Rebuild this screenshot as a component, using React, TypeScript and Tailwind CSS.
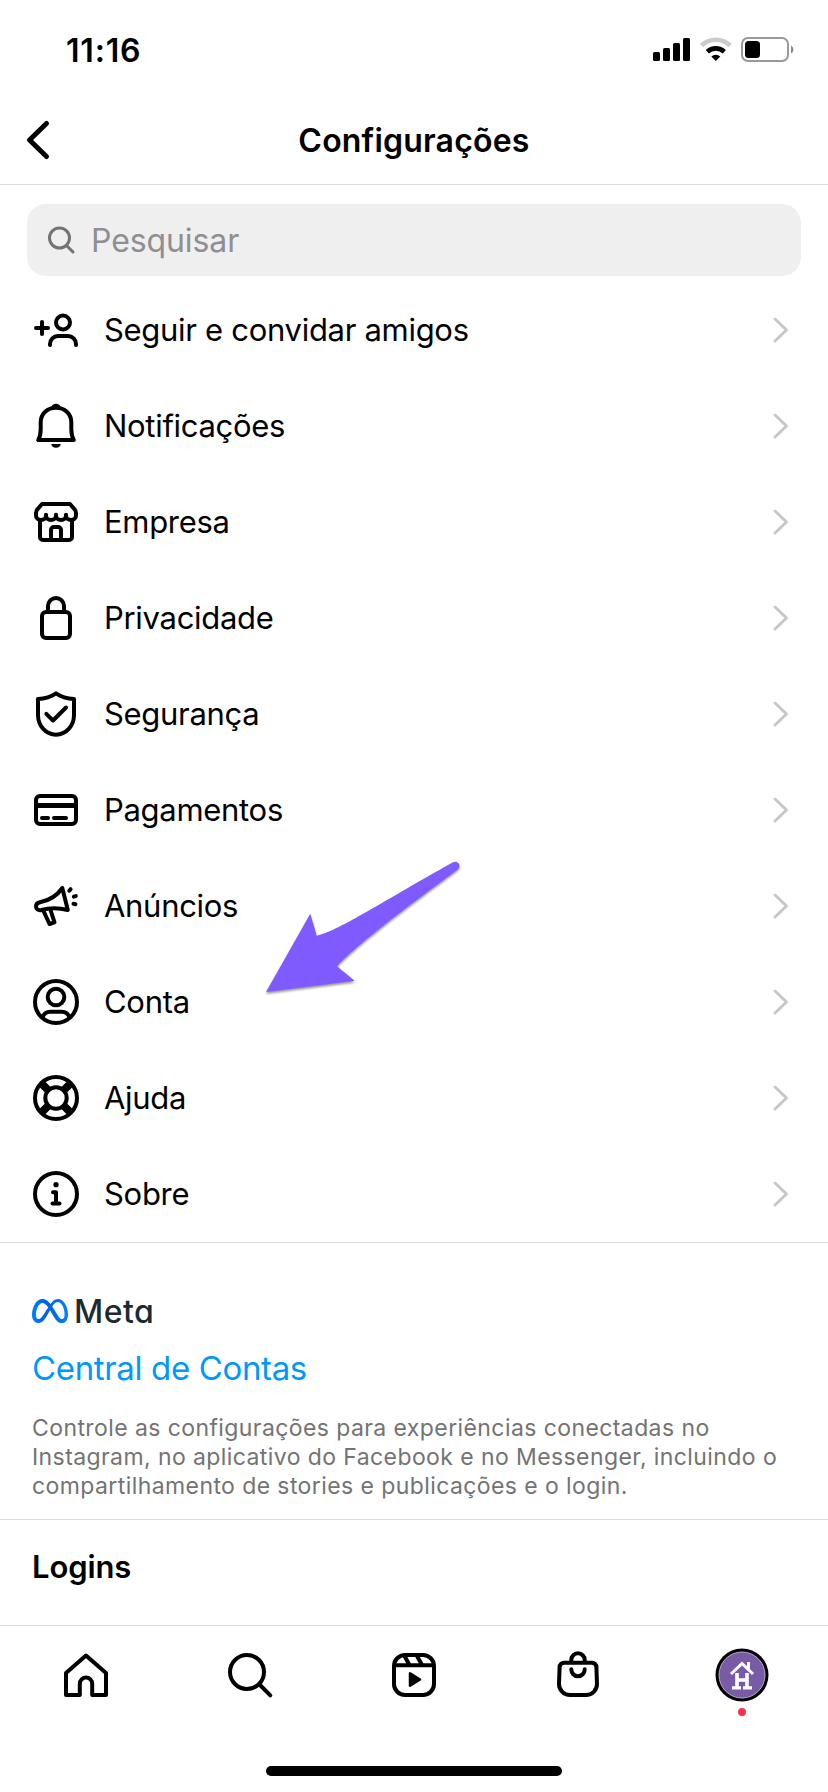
import type { ReactNode } from "react";
import { SiMeta } from "react-icons/si";

function Icon({ children }: { children: ReactNode }) {
  return (
    <svg
      viewBox="0 0 48 48"
      className="size-12 shrink-0 overflow-visible"
      fill="none"
      stroke="black"
      strokeWidth="4"
      strokeLinecap="round"
      strokeLinejoin="round"
    >
      {children}
    </svg>
  );
}

const items: { label: string; icon: ReactNode }[] = [
  {
    label: "Seguir e convidar amigos",
    icon: (
      <>
        <path d="M4 22h12M10 16v12" />
        <circle cx="31" cy="16.5" r="7" />
        <path d="M18 39v-1a8 8 0 0 1 8-8h10a8 8 0 0 1 8 8v1" />
      </>
    ),
  },
  {
    label: "Notificações",
    icon: (
      <>
        <path d="M6.2 38h35.6C40 35 39.3 31 39.3 27v-6.500C39.300 11.500 32.500 5.700 24 5.700S8.700 11.500 8.700 20.500V27c0 4-.7 8-2.500 11z" />
        <path d="M21.800 4.500a3.200 2.500 0 0 1 4.400 0" />
        <path d="M19.300 42h9.400a4.700 3.800 0 0 1-9.400 0z" fill="black" stroke="none" />
      </>
    ),
  },
  {
    label: "Empresa",
    icon: (
      <>
        <path d="M10 6h28l4.700 5.500a6 6 0 0 1 1.300 3.500v2.500a5 4.500 0 0 1-10 0a5 4.500 0 0 1-10 0a5 4.500 0 0 1-10 0a5 4.500 0 0 1-10 0V15a6 6 0 0 1 1.300-3.500z" />
        <path d="M14 16.700v2M24 16.700v2M34 16.700v2M8 23v16a3 3 0 0 0 3 3h26a3 3 0 0 0 3-3V23" />
        <path d="M19 42V32a3 3 0 0 1 3-3h4a3 3 0 0 1 3 3v10" />
      </>
    ),
  },
  {
    label: "Privacidade",
    icon: (
      <>
        <rect x="10" y="18" width="28" height="26" rx="4" />
        <path d="M16 18v-6a8 8 0 0 1 16 0v6" />
      </>
    ),
  },
  {
    label: "Segurança",
    icon: (
      <>
        <path d="M24 3.300C19 6.800 13 8.600 6 9v16c0 11 8 19.700 18 19.700S42 36 42 25V9c-7-.4-13-2.200-18-5.700z" />
        <path d="M14.300 23.800l6.700 6.700L34 17.500" />
      </>
    ),
  },
  {
    label: "Pagamentos",
    icon: (
      <>
        <rect x="4" y="10" width="40" height="28" rx="4" />
        <path d="M4 19.500h40" strokeWidth="5" strokeLinecap="butt" />
        <path d="M10 32h6M22 32h12" />
      </>
    ),
  },
  {
    label: "Anúncios",
    icon: (
      <>
        <path d="M8 20.300C17 18.500 25.500 13 30.300 6L35.800 28C27 25.800 17 25.800 9.500 28 6 28.800 4 27 4 24.500 4 22.500 5.500 20.800 8 20.300z" />
        <path d="M11.500 29l6 13 5-1.600-4-12.400" />
        <path d="M37.300 8.700l1.300-1.500M41.800 14.700l2-.6M41.500 21.800l2 .4" />
      </>
    ),
  },
  {
    label: "Conta",
    icon: (
      <>
        <circle cx="24" cy="24" r="21" />
        <circle cx="24" cy="19" r="8.300" />
        <path d="M10.500 39.500c1.300-3.700 3.800-5.700 7.800-5.700h11.400c4 0 6.500 2 7.800 5.700" />
      </>
    ),
  },
  {
    label: "Ajuda",
    icon: (
      <>
        <circle cx="24" cy="24" r="21" />
        <circle cx="24" cy="24" r="10.700" />
        <path
          d="M15.500 15.500l-6-6M32.500 15.500l6-6M15.500 32.500l-6 6M32.500 32.500l6 6"
          strokeWidth="8"
          strokeLinecap="butt"
        />
      </>
    ),
  },
  {
    label: "Sobre",
    icon: (
      <>
        <circle cx="24" cy="24" r="21" />
        <circle cx="24" cy="14.700" r="2.600" fill="black" stroke="none" />
        <path d="M21 22.300h3V33.500M20.500 33.500h7" />
      </>
    ),
  },
];

function StatusBar() {
  return (
    <div className="flex h-22 items-start justify-between pt-[34px] pr-[34px] pl-[66px]">
      <span className="pt-px text-[32px] leading-8 font-semibold tracking-[0.8px]">11:16</span>
      <svg width="142" height="32" viewBox="0 0 142 32" className="block">
        <rect x="1" y="18" width="7" height="9" rx="1.500" />
        <rect x="11" y="14" width="7" height="13" rx="1.500" />
        <rect x="21" y="9" width="7" height="18" rx="1.500" />
        <rect x="31" y="4" width="7" height="23" rx="1.500" />
        <g fill="none" strokeWidth="4.600">
          <path d="M49.500 11.500a20.500 20.500 0 0 1 28.500 0" stroke="#cbcbcb" />
          <path d="M55.300 17.700a12.500 12.500 0 0 1 17 0" stroke="black" />
        </g>
        <path d="M59.300 22.500a7 7 0 0 1 9 0L63.800 27z" />
        <rect x="90" y="4" width="46" height="23" rx="6" fill="none" stroke="#999" strokeWidth="2" />
        <rect x="93" y="7" width="15" height="17" rx="3.500" />
        <path d="M139 11.500a4.500 4.500 0 0 1 0 8z" fill="#888" />
      </svg>
    </div>
  );
}

function Header() {
  return (
    <header className="flex h-[97px] items-start border-b border-[#dbdbdb] px-6 pt-[30px]">
      <svg width="30" height="44" viewBox="0 0 30 44" className="w-[100px]" preserveAspectRatio="xMinYMid">
        <path
          d="M22.500 5.500L5.500 22l17 16.500"
          fill="none"
          stroke="black"
          strokeWidth="5"
          strokeLinecap="round"
          strokeLinejoin="round"
        />
      </svg>
      <h1 className="flex-1 pt-px text-center text-[32px] leading-[44px] font-semibold tracking-[0.2px]">
        Configurações
      </h1>
      <div className="w-[100px]" />
    </header>
  );
}

function BottomNav() {
  return (
    <nav className="h-[167px] border-t border-[#dbdbdb] px-1">
      <div className="grid grid-cols-5 justify-items-center pt-[25px]">
        <Icon>
          <path d="M4 22L24 4.500 44 22v22H30.200V32.800a6.200 6.200 0 0 0-12.400 0V44H4z" />
        </Icon>
        <Icon>
          <circle cx="21" cy="21" r="17" />
          <path d="M33.500 33.500L44.300 44.300" />
        </Icon>
        <Icon>
          <rect x="4" y="4" width="40" height="40" rx="11" />
          <path d="M4 14.300h40M14.500 5l5 9M27 5l5 9" strokeLinecap="butt" />
          <path d="M20 22.300v12.400l10-6.200z" fill="black" strokeWidth="2.500" />
        </Icon>
        <Icon>
          <path d="M10 11.700h28a4.500 4.500 0 0 1 4.400 4.400l.6 17a11 11 0 0 1-11 11H16a11 11 0 0 1-11-11l.6-17A4.500 4.500 0 0 1 10 11.700z" />
          <path d="M17.300 11V9a6.700 6.700 0 0 1 13.400 0v2M17.300 18.300a6.700 7 0 0 0 13.400 0" />
        </Icon>
        <div className="-mt-[3px] flex flex-col items-center gap-[6px]">
          <svg width="54" height="54" viewBox="0 0 54 54">
            <circle cx="27" cy="27" r="26.500" />
            <circle cx="27" cy="27" r="23" fill="#795ba5" stroke="#b9a9d2" strokeWidth="1" />
            <g fill="none" stroke="white">
              <path d="M16 26L27 15.500 38 26" strokeWidth="3" />
              <path d="M33.500 14v7" strokeWidth="3" />
              <path d="M22 25v15M32 25v15M22 32h10" strokeWidth="3.600" />
              <path d="M17 39.800h9M28 39.800h9" strokeWidth="3.200" />
            </g>
          </svg>
          <span className="size-2 rounded-full bg-[#ff334b]" />
        </div>
      </div>
    </nav>
  );
}

export default function App() {
  return (
    <div className="relative flex h-[1792px] w-[828px] flex-col overflow-hidden bg-white font-['Inter',sans-serif] text-black">
      <StatusBar />
      <Header />

      <div className="mx-[27px] mt-[19px] flex h-[72px] items-center rounded-[19px] bg-[#efefef] pl-[19px]">
        <svg width="30" height="30" viewBox="0 0 30 30" fill="none" stroke="#737373" strokeWidth="3">
          <circle cx="13.500" cy="13" r="10" />
          <path d="M20.500 20.500L27 27" strokeLinecap="round" />
        </svg>
        <span className="ml-[15px] pt-[2px] text-[32px] tracking-[-0.1px] text-[#8e8e93]">Pesquisar</span>
      </div>

      <ul className="mt-[6px]">
        {items.map((item) => (
          <li key={item.label} className="flex h-24 items-center pr-[37px] pl-8">
            <Icon>{item.icon}</Icon>
            <span className="ml-6 flex-1 text-[31px] tracking-[-0.3px]">{item.label}</span>
            <svg width="20" height="30" viewBox="0 0 20 30" fill="none">
              <path
                d="M4 4l11.500 11L4 26"
                stroke="#c7c7c7"
                strokeWidth="3"
                strokeLinecap="round"
                strokeLinejoin="round"
              />
            </svg>
          </li>
        ))}
      </ul>

      <section className="h-[278px] border-y border-[#dbdbdb] px-8">
        <div className="mt-[48px] flex h-10 items-center gap-[6px]">
          <svg width="0" height="0" className="absolute">
            <linearGradient id="meta" x1="0" y1="0" x2="1" y2="0">
              <stop offset="0" stopColor="#0082fb" />
              <stop offset="0.35" stopColor="#0064e0" />
              <stop offset="0.55" stopColor="#0068e6" />
              <stop offset="1" stopColor="#0082fb" />
            </linearGradient>
          </svg>
          <SiMeta size={36} fill="url(#meta)" />
          <span className="pt-[2px] text-[32px] font-medium tracking-[0.5px] text-[#1c2b33] [font-feature-settings:'cv11']">
            Meta
          </span>
        </div>
        <a className="mt-[15px] block text-[33px] leading-[44px] tracking-[-0.35px] text-[#0098fd]">
          Central de Contas
        </a>
        <p className="mt-[24px] text-[23px] leading-[29px] tracking-[0.41px] whitespace-nowrap text-[#737373]">
          Controle as configurações para experiências conectadas no
          <br />
          Instagram, no aplicativo do Facebook e no Messenger, incluindo o
          <br />
          compartilhamento de stories e publicações e o login.
        </p>
      </section>

      <h2 className="h-[105px] px-8 pt-[27px] text-[31px] leading-10 font-semibold tracking-[-0.1px]">Logins</h2>

      <BottomNav />

      <div className="absolute bottom-4 left-[266px] h-[10px] w-[296px] rounded-full bg-black" />

      {/* pointer to "Conta" */}
      <svg
        viewBox="0 0 210 150"
        className="absolute top-[855px] left-[260px] h-[150px] w-[210px] drop-shadow-[0_2px_1px_rgba(0,0,0,0.4)]"
      >
        <path
          d="M6 137L50.300 58.700 56.700 80.700C78 76 115 51 193 7.300A4 4 0 0 1 197.500 14.500C170 35 100 86 77 111.300L94.700 125.700z"
          fill="#7f5aff"
        />
      </svg>
    </div>
  );
}
